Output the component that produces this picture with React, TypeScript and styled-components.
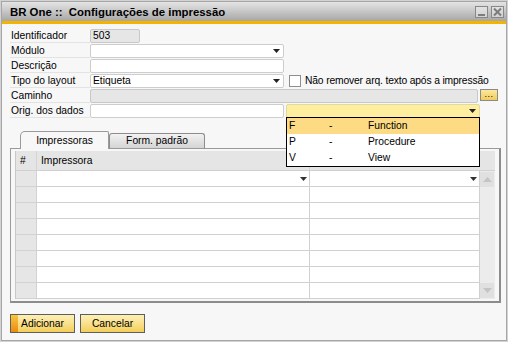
import React from "react";
import styled, { createGlobalStyle } from "styled-components";

const GlobalStyle = createGlobalStyle`
  html, body { margin: 0; padding: 0; background: #ffffff; }
  body {
    font-family: "Liberation Sans", Arial, sans-serif;
    font-size: 10.3px;
    color: #000;
  }
  * { box-sizing: border-box; }
`;

const Frame = styled.div`
  width: 508px;
  height: 342px;
  border: 1px solid #d2d2d2;
`;

const Window = styled.div`
  width: 100%;
  height: 100%;
  border: 1px solid #a6a6a6;
  background: #f7f7f7;
  display: flex;
  flex-direction: column;
`;

const TitleBar = styled.div`
  height: 19px;
  flex: none;
  background: linear-gradient(to bottom, #e4e4e4 0%, #c6c6c6 50%, #a6a6a6 100%);
  display: flex;
  align-items: flex-start;
  justify-content: space-between;
  padding: 0 2px 0 8px;
`;

const TitleText = styled.div`
  font-weight: bold;
  font-size: 11.4px;
  line-height: 14px;
  padding-top: 3px;
  white-space: pre;
`;

const TitleButtons = styled.div`
  display: flex;
  gap: 3px;
  padding-top: 4px;
`;

const TitleButton = styled.div`
  width: 13px;
  height: 12px;
  border: 1px solid #888888;
  background: linear-gradient(#e2e2e2, #d2d2d2);
  display: flex;
  align-items: flex-end;
  justify-content: center;
`;

const MinGlyph = styled.div`
  width: 7px;
  height: 2px;
  background: #7c7c7c;
  margin-bottom: 1px;
`;

const Accent = styled.div`
  height: 3px;
  flex: none;
  background: #f4b300;
`;

const Body = styled.div`
  flex: 1;
  padding: 5px 8px 0 8px;
  display: flex;
  flex-direction: column;
`;

const Row = styled.div`
  display: flex;
  align-items: flex-start;
  height: 15px;
`;

const Label = styled.div`
  width: 80px;
  height: 14px;
  line-height: 14px;
  padding-left: 1px;
  border-bottom: 1px solid #e3e3e3;
  white-space: nowrap;
  flex: none;
`;

type Variant = "white" | "gray" | "yellow";

const fieldBg: Record<Variant, string> = {
  white: "#ffffff",
  gray: "#e6e6e6",
  yellow: "#fdeea0",
};
const fieldBorder: Record<Variant, string> = {
  white: "#cdcdcd",
  gray: "#c8c8c8",
  yellow: "#e2d9a0",
};

const Field = styled.div<{ $w: number; $v?: Variant; $ml?: number }>`
  position: relative;
  width: ${(p) => p.$w}px;
  height: 14px;
  margin-left: ${(p) => p.$ml ?? 0}px;
  flex: none;
  border: 1px solid ${(p) => fieldBorder[p.$v ?? "white"]};
  border-radius: 2px;
  background: ${(p) => fieldBg[p.$v ?? "white"]};
  padding: 0 3px 0 2px;
  line-height: 12px;
  display: flex;
  align-items: center;
  justify-content: space-between;
  white-space: nowrap;
`;

const Arrow = ({ color = "#222" }: { color?: string }) => (
  <svg width="7" height="4" viewBox="0 0 7 4" style={{ flex: "none" }}>
    <path d="M0 0 H7 L3.5 4 Z" fill={color} />
  </svg>
);

const Checkbox = styled.div`
  width: 12px;
  height: 12px;
  margin: 1px 4px 0 5px;
  border: 1px solid #8e8e8e;
  background: #ffffff;
  flex: none;
`;

const CheckText = styled.span`
  line-height: 14px;
  white-space: nowrap;
  letter-spacing: -0.15px;
`;

const DotsButton = styled.div`
  width: 18px;
  height: 12px;
  margin-left: 2px;
  border: 1px solid #8a8a8a;
  background: linear-gradient(#fbe7a0, #f2cc5a);
  font-size: 9px;
  line-height: 8px;
  text-align: center;
  letter-spacing: 0.5px;
  flex: none;
`;

const Dropdown = styled.div`
  position: absolute;
  top: 12px;
  left: -1px;
  width: 194px;
  border: 1px solid #000000;
  background: #ffffff;
  z-index: 5;
`;

const DropRow = styled.div<{ $active?: boolean }>`
  display: grid;
  grid-template-columns: 40px 39px 1fr;
  height: 16px;
  line-height: 16px;
  padding-left: 2px;
  background: ${(p) => (p.$active ? "#fcdb84" : "#ffffff")};
`;

const TabStrip = styled.div`
  display: flex;
  align-items: flex-end;
  height: 18px;
  margin-top: 12px;
  margin-bottom: -1px;
  padding-left: 10px;
  position: relative;
  z-index: 1;
`;

const Tab = styled.div<{ $active?: boolean }>`
  height: ${(p) => (p.$active ? 18 : 16)}px;
  width: ${(p) => (p.$active ? 89 : 96)}px;
  border: 1px solid ${(p) => (p.$active ? "#9a9a9a" : "#8c8c8c")};
  border-bottom: ${(p) => (p.$active ? "none" : "1px solid #9a9a9a")};
  border-radius: ${(p) => (p.$active ? "5px 2px 0 0" : "3px 3px 0 0")};
  background: ${(p) =>
    p.$active ? "#f7f7f7" : "linear-gradient(#f2f2f2, #d4d4d4)"};
  text-align: center;
  line-height: ${(p) => (p.$active ? 17 : 14)}px;
  white-space: nowrap;
`;

const Panel = styled.div`
  width: 491px;
  height: 155px;
  border: 1px solid #9a9a9a;
  border-right: 2px solid #8c8c8c;
  border-bottom: 2px solid #8c8c8c;
  padding: 2px 5px 1px 4px;
`;

const Grid = styled.div`
  display: grid;
  grid-template-columns: 21px 273px 170px 15px;
  grid-template-rows: 20px repeat(8, 16px);
  border-left: 1px solid #c8c8c8;
`;

const HeadCell = styled.div<{ $divider?: boolean }>`
  background: #e5e5e5;
  border-bottom: 1px solid #d0d0d0;
  border-right: ${(p) => (p.$divider ? "1px solid #d4d4d4" : "none")};
  line-height: 19px;
  padding-left: 4px;
  white-space: nowrap;
`;

const NumCell = styled.div`
  background: #e6e6e6;
  border-bottom: 1px solid #d2d2d2;
  border-right: 1px solid #d2d2d2;
`;

const Cell = styled.div`
  background: #ffffff;
  border-bottom: 1px solid #d0d0d0;
  border-right: 1px solid #d0d0d0;
  display: flex;
  align-items: center;
  justify-content: flex-end;
  padding-right: 2px;
`;

const Scrollbar = styled.div`
  grid-column: 4;
  grid-row: 2 / span 8;
  background: #ececec;
  display: flex;
  flex-direction: column;
  justify-content: space-between;
  padding: 1px 1px 1px 0;
`;

const ScrollButton = styled.div`
  height: 15px;
  background: #e0e0e0;
  display: flex;
  align-items: center;
  justify-content: center;
`;

const ButtonRow = styled.div`
  display: flex;
  gap: 5px;
  margin-top: 11px;
  padding-left: 0;
`;

const Button = styled.div<{ $primary?: boolean }>`
  width: 65px;
  height: 19px;
  border: 1px solid #5e5e5e;
  background: ${(p) =>
    p.$primary
      ? "linear-gradient(#f9c640, #ec8a10) left / 7px 100% no-repeat, linear-gradient(#fdf0b6, #f9e08c 50%, #f3ce58)"
      : "linear-gradient(#fdf0b6, #f9e08c 50%, #f3ce58)"};
  text-align: center;
  line-height: 17px;
  white-space: nowrap;
`;

const OrigCombo = styled(Field)``;

export default function App() {
  const rows = Array.from({ length: 8 }, (_, i) => i);
  return (
    <>
      <GlobalStyle />
      <Frame>
        <Window>
          <TitleBar>
            <TitleText>{"BR One ::  Configurações de impressão"}</TitleText>
            <TitleButtons>
              <TitleButton>
                <MinGlyph />
              </TitleButton>
              <TitleButton>
                <svg width="11" height="10" viewBox="0 0 11 10">
                  <path d="M2 1.5 L9 8.5 M9 1.5 L2 8.5" stroke="#7c7c7c" strokeWidth="2" />
                </svg>
              </TitleButton>
            </TitleButtons>
          </TitleBar>
          <Accent />
          <Body>
            <Row>
              <Label>Identificador</Label>
              <Field $w={50} $v="gray">503</Field>
            </Row>
            <Row>
              <Label>Módulo</Label>
              <Field $w={194}>
                <span />
                <Arrow />
              </Field>
            </Row>
            <Row>
              <Label>Descrição</Label>
              <Field $w={194} />
            </Row>
            <Row>
              <Label>Tipo do layout</Label>
              <Field $w={194}>
                <span>Etiqueta</span>
                <Arrow />
              </Field>
              <Checkbox />
              <CheckText>Não remover arq. texto após a impressão</CheckText>
            </Row>
            <Row>
              <Label>Caminho</Label>
              <Field $w={388} $v="gray" />
              <DotsButton>...</DotsButton>
            </Row>
            <Row>
              <Label>Orig. dos dados</Label>
              <Field $w={194} />
              <OrigCombo $w={194} $v="yellow" $ml={2}>
                <span />
                <Arrow />
                <Dropdown>
                  <DropRow $active>
                    <span>F</span>
                    <span>-</span>
                    <span>Function</span>
                  </DropRow>
                  <DropRow>
                    <span>P</span>
                    <span>-</span>
                    <span>Procedure</span>
                  </DropRow>
                  <DropRow>
                    <span>V</span>
                    <span>-</span>
                    <span>View</span>
                  </DropRow>
                </Dropdown>
              </OrigCombo>
            </Row>

            <TabStrip>
              <Tab $active>Impressoras</Tab>
              <Tab>Form. padrão</Tab>
            </TabStrip>
            <Panel>
              <Grid>
                <HeadCell $divider>#</HeadCell>
                <HeadCell $divider>Impressora</HeadCell>
                <HeadCell />
                <HeadCell />
                {rows.map((i) => (
                  <React.Fragment key={i}>
                    <NumCell />
                    <Cell>{i === 0 && <Arrow color="#333" />}</Cell>
                    <Cell>{i === 0 && <Arrow color="#333" />}</Cell>
                  </React.Fragment>
                ))}
                <Scrollbar>
                  <ScrollButton>
                    <svg width="9" height="5" viewBox="0 0 9 5">
                      <path d="M0 5 H9 L4.5 0 Z" fill="#c4c4c4" />
                    </svg>
                  </ScrollButton>
                  <ScrollButton>
                    <svg width="9" height="5" viewBox="0 0 9 5">
                      <path d="M0 0 H9 L4.5 5 Z" fill="#c4c4c4" />
                    </svg>
                  </ScrollButton>
                </Scrollbar>
              </Grid>
            </Panel>
            <ButtonRow>
              <Button $primary>Adicionar</Button>
              <Button>Cancelar</Button>
            </ButtonRow>
          </Body>
        </Window>
      </Frame>
    </>
  );
}
